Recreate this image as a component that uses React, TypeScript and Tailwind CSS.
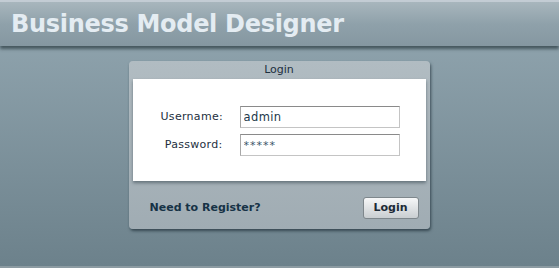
import React from "react";

export default function App() {
  return (
    <div className="h-[268px] w-full flex flex-col bg-gradient-to-b from-[#94a8b2] to-[#6c818b] font-['DejaVu_Sans',sans-serif] overflow-hidden">
      <header className="relative z-10 h-[46px] shrink-0 border-t-[2px] border-[#c3ccd4] bg-gradient-to-b from-[#a8b6bd] via-[#8fa1aa] to-[#8597a1] shadow-[0_3px_3px_rgba(40,55,62,0.7)] flex items-center pl-[11px]">
        <h1 className="text-[24px] font-bold text-[#e4ecf2] tracking-[-0.3px] leading-none">
          Business Model Designer
        </h1>
      </header>
      <main className="flex-1 flex justify-center pt-[15px]">
        <div className="w-[301px] h-[168px] rounded-[4px] bg-gradient-to-b from-[#b1bcc2] to-[#a0acb3] shadow-[1px_2px_3px_rgba(30,45,55,0.7)] flex flex-col ml-[-1px]">
          <div className="h-[18px] flex items-center justify-center text-[11px] text-[#1d2f3e]">
            Login
          </div>
          <div className="mx-[4px] h-[102px] bg-white shadow-[0_2px_3px_rgba(40,55,65,0.5)] flex flex-col justify-center pl-[28px] gap-[6px] pt-[2px]">
            <div className="flex items-center">
              <label className="w-[62px] text-right text-[11px] text-[#1d2f3e] mr-[17px] tracking-[0.3px]">Username:</label>
              <input
                readOnly
                value="admin"
                className="w-[160px] h-[22px] border border-[#c4c4c4] border-t-[#8a8a8a] border-l-[#a8a8a8] px-[3px] text-[11.5px] tracking-[0.4px] text-[#21384a] outline-none font-['DejaVu_Sans',sans-serif]"
              />
            </div>
            <div className="flex items-center">
              <label className="w-[62px] text-right text-[11px] text-[#1d2f3e] mr-[17px] tracking-[0.3px]">Password:</label>
              <input
                readOnly
                value="*****"
                className="w-[160px] h-[22px] border border-[#c4c4c4] border-t-[#8a8a8a] border-l-[#a8a8a8] px-[3px] text-[11px] tracking-[1px] text-[#3a5468] outline-none font-['DejaVu_Sans',sans-serif]"
              />
            </div>
          </div>
          <div className="flex-1 flex items-center justify-between pl-[21px] pr-[11px] pt-[6px]">
            <span className="text-[11px] font-bold text-[#163246]">Need to Register?</span>
            <button className="w-[56px] h-[22px] rounded-[3px] border border-[#7e878c] bg-gradient-to-b from-[#f6f7f8] to-[#c9ced1] text-[11px] font-bold text-[#1c2a36]">
              Login
            </button>
          </div>
        </div>
      </main>
      <div className="h-[2px] shrink-0 bg-[#8c9ba2]" />
    </div>
  );
}
